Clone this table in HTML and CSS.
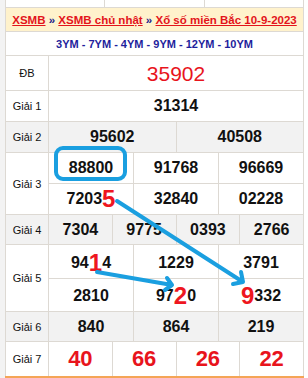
FILE: index.html
```html
<!DOCTYPE html>
<html lang="vi">
<head>
<meta charset="utf-8">
<title>XSMB chủ nhật 10-9-2023</title>
<link rel="stylesheet" href="styles.css">
</head>
<body>
<div class="page">
  <div class="tbl">
    <div class="strip"><div></div><div></div><div></div></div>
    <div class="head"><span class="crumbs"><a href="#">XSMB</a> <span class="sep">»</span> <a href="#">XSMB chủ nhật</a> <span class="sep">»</span> <a href="#">Xổ số miền Bắc 10-9-2023</a></span></div>
    <div class="ym">3YM - 7YM - 4YM - 9YM - 12YM - 10YM</div>

    <div class="row">
      <div class="lbl">ĐB</div>
      <div class="nums c1 h34"><div class="n db">35902</div></div>
    </div>
    <div class="row">
      <div class="lbl">Giải 1</div>
      <div class="nums c1 h30"><div class="n">31314</div></div>
    </div>
    <div class="row alt">
      <div class="lbl">Giải 2</div>
      <div class="nums c2 h30"><div class="n">95602</div><div class="n">40508</div></div>
    </div>
    <div class="row">
      <div class="lbl">Giải 3</div>
      <div class="nums c3 h30">
        <div class="n">88800</div><div class="n">91768</div><div class="n">96669</div>
        <div class="n">7203<span class="hl">5</span></div><div class="n">32840</div><div class="n">02228</div>
      </div>
    </div>
    <div class="row alt">
      <div class="lbl">Giải 4</div>
      <div class="nums c4 h29"><div class="n">7304</div><div class="n">9775</div><div class="n">0393</div><div class="n">2766</div></div>
    </div>
    <div class="row">
      <div class="lbl">Giải 5</div>
      <div class="nums c3 g5">
        <div class="n">94<span class="hl">1</span>4</div><div class="n">1229</div><div class="n">3791</div>
        <div class="n">2810</div><div class="n">97<span class="hl">2</span>0</div><div class="n"><span class="hl">9</span>332</div>
      </div>
    </div>
    <div class="row alt">
      <div class="lbl">Giải 6</div>
      <div class="nums c3 h29"><div class="n">840</div><div class="n">864</div><div class="n">219</div></div>
    </div>
    <div class="row">
      <div class="lbl">Giải 7</div>
      <div class="nums c4 h34"><div class="n g7">40</div><div class="n g7">66</div><div class="n g7">26</div><div class="n g7">22</div></div>
    </div>
  </div>
  <div class="foot"></div>

  <svg class="overlay" width="308" height="378" viewBox="0 0 308 378" aria-hidden="true">
    <g fill="none" stroke="#1a9fe0" stroke-width="4" stroke-linecap="round" stroke-linejoin="round">
      <rect x="56" y="148" width="69" height="31" rx="7"/>
      <path d="M117 201 L243 282 M241 272 L243 282 L233 284"/>
      <path d="M97 272 L172 285 M167 278 L172 285 L165 290"/>
    </g>
  </svg>
</div>
</body>
</html>
```
FILE: styles.css
```css
* { box-sizing: border-box; }
html, body { margin: 0; padding: 0; }
body {
  background: linear-gradient(to right, #f3f3f3 5px, #ffffff 5px);
  font-family: "Liberation Sans", Arial, sans-serif;
  color: #111;
}
.page {
  position: relative;
  width: 308px;
  height: 378px;
  overflow: hidden;
}
.tbl {
  margin-left: 5px;
  width: 299px;
  display: grid;
  gap: 1px;
  background: #ddd9d3;
  padding: 0 1px;
}
.strip {
  display: grid;
  grid-template-columns: repeat(3, 1fr);
  gap: 1px;
  height: 7px;
}
.strip div { background: #fff; }
.head {
  background: #fff2cc;
  height: 23px;
  display: flex;
  align-items: center;
  justify-content: center;
  font-size: 11.5px;
  font-weight: bold;
  white-space: nowrap;
}
.head a { color: #e3141b; text-decoration: underline; }
.head .sep { color: #22228a; }
.ym {
  background: #fff;
  height: 23px;
  display: flex;
  align-items: center;
  justify-content: center;
  font-size: 11px;
  font-weight: bold;
  color: #1e1e9c;
}
.row {
  display: grid;
  grid-template-columns: 42px 1fr;
  gap: 1px;
}
.lbl {
  background: #fff;
  display: flex;
  align-items: center;
  justify-content: center;
  font-size: 11px;
  color: #111;
}
.nums { display: grid; gap: 1px; }
.c1 { grid-template-columns: 1fr; }
.c2 { grid-template-columns: repeat(2, 1fr); }
.c3 { grid-template-columns: repeat(3, 1fr); }
.c4 { grid-template-columns: repeat(4, 1fr); }
.h29 { grid-auto-rows: 29px; }
.h30 { grid-auto-rows: 30px; }
.h34 { grid-auto-rows: 34px; }
.g5 { grid-template-rows: 33px 32px; }
.g5 .n { padding-top: 2px; }
.n {
  background: #fff;
  display: flex;
  align-items: center;
  justify-content: center;
  font-size: 16px;
  font-weight: bold;
  line-height: 16px;
  color: #111;
}
.alt .lbl, .alt .n { background: #f2f2f2; }
.n.db {
  font-size: 21px;
  font-weight: normal;
  color: #e8141c;
  line-height: 21px;
}
.n.g7 {
  font-size: 22px;
  color: #e8141c;
  line-height: 22px;
}
.hl {
  color: #ee1620;
  font-size: 24px;
  line-height: 10px;
}
.foot {
  margin-left: 5px;
  width: 299px;
  height: 2px;
  background: #f4a556;
}
.overlay {
  position: absolute;
  top: 0;
  left: 0;
  pointer-events: none;
}
```
